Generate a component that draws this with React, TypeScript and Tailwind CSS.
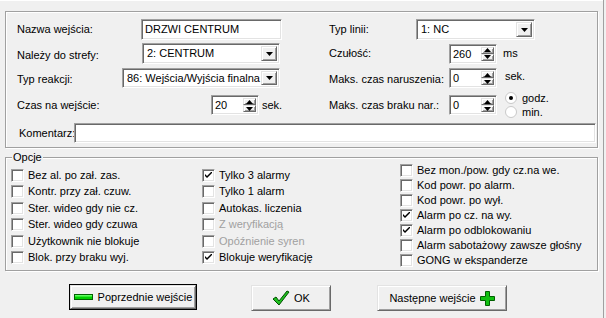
import React from "react";

const sunken =
  "bg-white border border-t-[#a0a0a0] border-l-[#a0a0a0] border-b-white border-r-white shadow-[inset_1px_1px_0_#696969,inset_-1px_-1px_0_#e3e3e3]";
const raised =
  "bg-[#f0f0f0] border border-t-[#e3e3e3] border-l-[#e3e3e3] border-b-[#696969] border-r-[#696969] shadow-[inset_1px_1px_0_#fff,inset_-1px_-1px_0_#a0a0a0]";
const etched =
  "border border-[#a0a0a0] shadow-[1px_1px_0_#fff,inset_1px_1px_0_#fff]";

function Tri({ up = false }: { up?: boolean }) {
  return (
    <svg width="7" height="4" viewBox="0 0 7 4">
      {up ? <polygon points="0,4 7,4 3.5,0" fill="#000" /> : <polygon points="0,0 7,0 3.5,4" fill="#000" />}
    </svg>
  );
}

function TextBox({ w, value = "" }: { w: string; value?: string }) {
  return (
    <div className={`${sunken} ${w} h-full flex items-center pl-[3px] shrink-0`}>
      <span className="whitespace-nowrap">{value}</span>
    </div>
  );
}

function Select({ w, value }: { w: string; value: string }) {
  return (
    <div className={`${sunken} ${w} h-full flex items-center p-[2px] shrink-0`}>
      <span className="flex-1 pl-[2px] whitespace-nowrap overflow-hidden">{value}</span>
      <div className={`${raised} w-[16px] h-full flex items-center justify-center shrink-0`}>
        <Tri />
      </div>
    </div>
  );
}

function Spin({ value }: { value: string }) {
  return (
    <div className={`${sunken} w-[48px] h-[20px] flex items-stretch p-[2px] shrink-0`}>
      <span className="flex-1 pl-[1px] leading-[14px]">{value}</span>
      <div className="w-[13px] flex flex-col">
        <div className={`${raised} flex-1 flex items-center justify-center`}>
          <Tri up />
        </div>
        <div className={`${raised} flex-1 flex items-center justify-center`}>
          <Tri />
        </div>
      </div>
    </div>
  );
}

function Check({ label, checked = false, disabled = false, h }: { label: string; checked?: boolean; disabled?: boolean; h: string }) {
  return (
    <div className={`flex items-center ${h}`}>
      <div className={`${sunken} w-[13px] h-[13px] flex items-center justify-center shrink-0`}>
        {checked && (
          <svg width="7" height="7" viewBox="0 0 7 7">
            <path d="M0 2 L0 4 L2 6 L7 1 L7 -1 L2 4 Z" fill="#000" />
          </svg>
        )}
      </div>
      <span className={`ml-[4px] whitespace-nowrap ${disabled ? "text-[#a0a0a0]" : "text-black"}`}>{label}</span>
    </div>
  );
}

function Radio({ label, checked = false }: { label: string; checked?: boolean }) {
  return (
    <div className="flex items-center h-[14px]">
      <svg width="12" height="12" viewBox="0 0 12 12">
        <circle cx="6" cy="6" r="5.5" fill="#fff" stroke="#c8c8c8" />
        {checked && <circle cx="6" cy="6" r="2" fill="#000" />}
      </svg>
      <span className="ml-[5px]">{label}</span>
    </div>
  );
}

const lbl = "shrink-0 whitespace-nowrap";

export default function App() {
  return (
    <div className="w-[606px] h-[318px] bg-[#f0f0f0] text-[11px] leading-[13px] text-black font-['Liberation_Sans',Arial,sans-serif] overflow-hidden flex">
      <div className="w-[603px] flex flex-col border-t border-t-white">
        {/* Top fields */}
        <div className={`ml-[5px] mt-[10px] w-[593px] h-[137px] ${etched} flex flex-col`}>
          <div className="flex h-[21px] mt-[7px]">
            <div className="w-[300px] flex items-center pl-[11px]">
              <span className={`w-[124px] ${lbl}`}>Nazwa wejścia:</span>
              <TextBox w="w-[141px]" value="DRZWI CENTRUM" />
            </div>
            <div className="flex items-center pl-[23px]">
              <span className={`w-[87px] ${lbl}`}>Typ linii:</span>
              <Select w="w-[119px]" value="1: NC" />
            </div>
          </div>
          <div className="flex h-[21px] mt-[3px]">
            <div className="w-[300px] flex items-center pl-[11px]">
              <span className={`w-[125px] ${lbl} mt-[3px]`}>Należy do strefy:</span>
              <Select w="w-[138px]" value="2: CENTRUM" />
            </div>
            <div className="flex items-center pl-[23px]">
              <span className={`w-[120px] ${lbl}`}>Czułość:</span>
              <Spin value="260" />
              <span className="ml-[6px]">ms</span>
            </div>
          </div>
          <div className="flex h-[20px] mt-[4px]">
            <div className="w-[300px] flex items-center pl-[11px]">
              <span className={`w-[105px] ${lbl} mt-[3px]`}>Typ reakcji:</span>
              <Select w="w-[158px]" value="86: Wejścia/Wyjścia finalna" />
            </div>
            <div className="flex items-center pl-[23px]">
              <span className={`w-[120px] ${lbl} mt-[3px]`}>Maks. czas naruszenia:</span>
              <Spin value="0" />
              <span className="ml-[8px] -mt-[4px]">sek.</span>
            </div>
          </div>
          <div className="flex h-[20px] mt-[7px]">
            <div className="w-[300px] flex items-center pl-[11px]">
              <span className={`w-[194px] ${lbl}`}>Czas na wejście:</span>
              <Spin value="20" />
              <span className="ml-[3px]">sek.</span>
            </div>
            <div className="flex items-center pl-[23px]">
              <span className={`w-[120px] ${lbl}`}>Maks. czas braku nar.:</span>
              <Spin value="0" />
              <div className="ml-[8px] flex flex-col">
                <Radio label="godz." checked />
                <Radio label="min." />
              </div>
            </div>
          </div>
          <div className="flex h-[20px] mt-[8px] items-center pl-[13px]">
            <span className={`w-[55px] ${lbl}`}>Komentarz:</span>
            <TextBox w="w-[522px]" />
          </div>
        </div>

        {/* Options */}
        <div className={`relative ml-[5px] mt-[9px] w-[593px] h-[114px] ${etched} flex`}>
          <span className="absolute left-[6px] -top-[7px] bg-[#f0f0f0] px-[1px] leading-[13px]">Opcje</span>
          <div className="w-[196px] pl-[5px] pt-[9px] flex flex-col">
            <Check h="h-[16.5px]" label="Bez al. po zał. zas." />
            <Check h="h-[16.5px]" label="Kontr. przy zał. czuw." />
            <Check h="h-[16.5px]" label="Ster. wideo gdy nie cz." />
            <Check h="h-[16.5px]" label="Ster. wideo gdy czuwa" />
            <Check h="h-[16.5px]" label="Użytkownik nie blokuje" />
            <Check h="h-[16.5px]" label="Blok. przy braku wyj." />
          </div>
          <div className="w-[198px] pt-[9px] flex flex-col">
            <Check h="h-[16.5px]" label="Tylko 3 alarmy" checked />
            <Check h="h-[16.5px]" label="Tylko 1 alarm" />
            <Check h="h-[16.5px]" label="Autokas. liczenia" />
            <Check h="h-[16.5px]" label="Z weryfikacją" disabled />
            <Check h="h-[16.5px]" label="Opóźnienie syren" disabled />
            <Check h="h-[16.5px]" label="Blokuje weryfikację" checked />
          </div>
          <div className="pt-[5px] flex flex-col">
            <Check h="h-[15px]" label="Bez mon./pow. gdy cz.na we." />
            <Check h="h-[15px]" label="Kod powr. po alarm." />
            <Check h="h-[15px]" label="Kod powr. po wył." />
            <Check h="h-[15px]" label="Alarm po cz. na wy." checked />
            <Check h="h-[15px]" label="Alarm po odblokowaniu" checked />
            <Check h="h-[15px]" label="Alarm sabotażowy zawsze głośny" />
            <Check h="h-[15px]" label="GONG w ekspanderze" />
          </div>
        </div>

        {/* Buttons */}
        <div className="flex items-start mt-[13px]">
          <div className="ml-[69px] w-[128px] h-[26px] border border-black shrink-0">
            <div className={`${raised} w-full h-full flex items-center justify-center gap-[5px]`}>
              <svg width="19" height="6" viewBox="0 0 19 6">
                <rect x="0.5" y="0.5" width="18" height="5" fill="#00d000" stroke="#006000" />
                <rect x="1" y="1" width="17" height="1.5" fill="#60ff60" />
              </svg>
              <span className="whitespace-nowrap">Poprzednie wejście</span>
            </div>
          </div>
          <div className={`ml-[54px] mt-[1px] w-[80px] h-[26px] ${raised} flex items-center justify-center gap-[4px] shrink-0`}>
            <svg width="18" height="16" viewBox="0 0 18 16">
              <path d="M1 9 L4 7 L7 11 L15 1 L17 2 L7 15 Z" fill="#20c020" stroke="#005000" strokeWidth="1" strokeLinejoin="round" />
            </svg>
            <span>OK</span>
          </div>
          <div className={`ml-[46px] mt-[1px] w-[130px] h-[26px] ${raised} flex items-center justify-center gap-[4px] shrink-0`}>
            <span className="whitespace-nowrap">Następne wejście</span>
            <svg width="15" height="15" viewBox="0 0 15 15">
              <path d="M5.5 0.5 H9.5 V5.5 H14.5 V9.5 H9.5 V14.5 H5.5 V9.5 H0.5 V5.5 H5.5 Z" fill="#10c010" stroke="#006000" />
            </svg>
          </div>
        </div>
      </div>
      <div className="w-[3px] border-l border-l-[#a0a0a0] bg-[#f0f0f0]" />
    </div>
  );
}
